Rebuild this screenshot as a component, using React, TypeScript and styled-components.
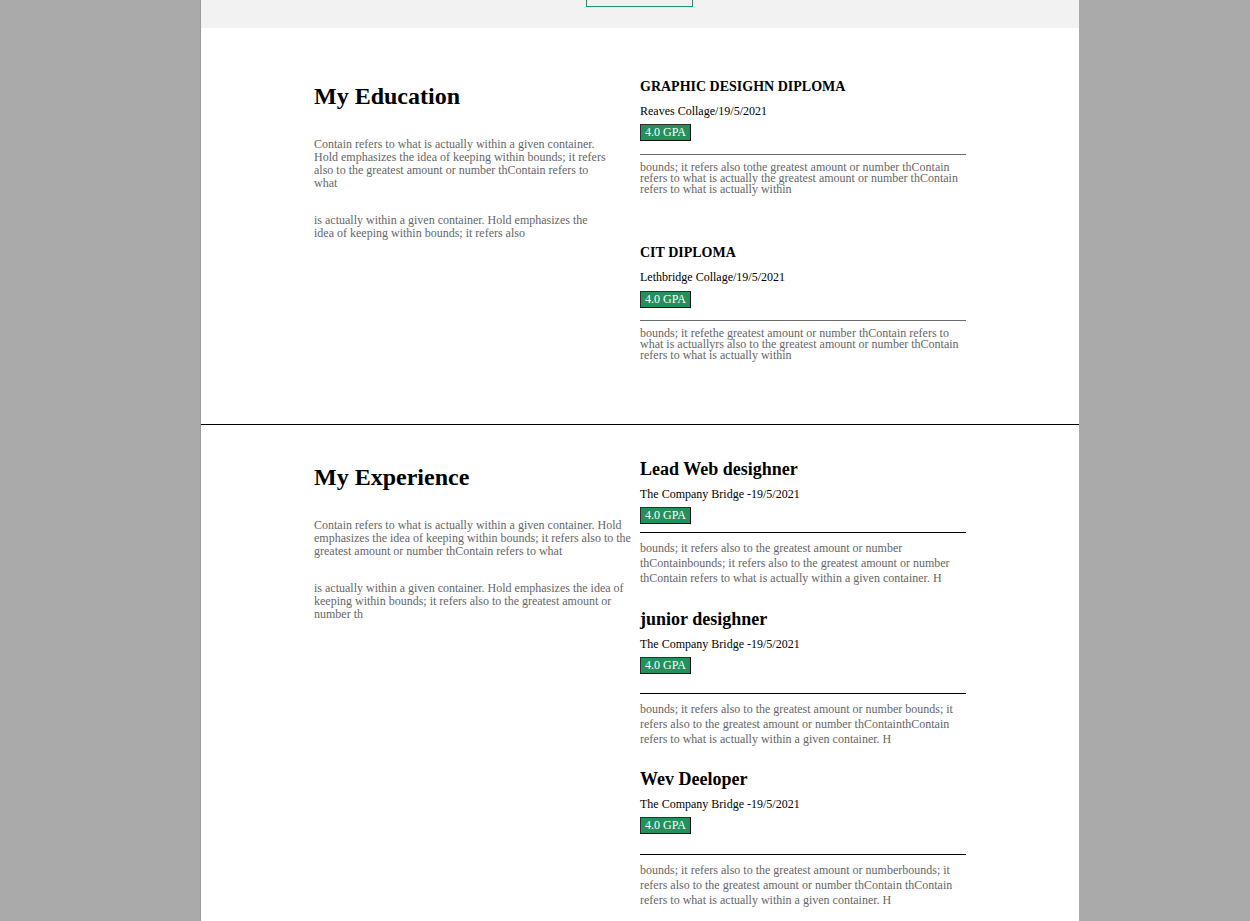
import React from "react";
import styled, { createGlobalStyle } from "styled-components";

const GlobalStyle = createGlobalStyle`
  html, body {
    margin: 0;
    padding: 0;
    background: #aaaaaa;
  }
  body {
    font-family: "Liberation Serif", "Times New Roman", serif;
  }
`;

const Page = styled.div`
  display: flex;
  padding: 0 171px 0 200px;
  min-height: 921px;
`;

const Sheet = styled.main`
  width: 879px;
  background: #ffffff;
  border-left: 1px solid #9a9a9a;
  box-sizing: border-box;
`;

const TopBand = styled.header`
  height: 28px;
  background: #f2f2f2;
  display: flex;
  justify-content: center;
  overflow: hidden;
`;

const GhostButton = styled.button`
  width: 107px;
  height: 40px;
  margin-top: -33px;
  margin-left: -1px;
  background: transparent;
  border: 1px solid #1f9a5e;
  font-family: inherit;
`;

const Section = styled.section<{ $top: number; $bottom: number; $rule?: boolean }>`
  padding: ${(p) => p.$top}px 0 ${(p) => p.$bottom}px;
  border-bottom: ${(p) => (p.$rule ? "1px solid #000" : "none")};
`;

const Columns = styled.div`
  display: grid;
  grid-template-columns: 326px 326px;
  justify-content: center;
  align-items: start;
`;

const LeftCol = styled.div<{ $offset: number }>`
  padding-top: ${(p) => p.$offset}px;
`;

const SectionTitle = styled.h2`
  margin: 0 0 28px;
  font-size: 24px;
  line-height: 28px;
  font-weight: bold;
  color: #000;
`;

const Intro = styled.p<{ $width: string }>`
  margin: 0 0 24px;
  width: ${(p) => p.$width};
  font-size: 12px;
  line-height: 13px;
  color: #666;
`;

const RightCol = styled.div`
  display: flex;
  flex-direction: column;
`;

const Item = styled.article<{ $gap: number }>`
  display: flex;
  flex-direction: column;
  align-items: flex-start;
  margin-top: ${(p) => p.$gap}px;
`;

const ItemTitle = styled.h3<{ $size: number; $lh: number }>`
  margin: 0;
  font-size: ${(p) => p.$size}px;
  line-height: ${(p) => p.$lh}px;
  font-weight: bold;
  color: #000;
`;

const Meta = styled.p<{ $top: number }>`
  margin: ${(p) => p.$top}px 0 0;
  font-size: 12px;
  line-height: 14px;
  color: #000;
`;

const Badge = styled.span<{ $top: number }>`
  display: inline-block;
  margin-top: ${(p) => p.$top}px;
  padding: 0 4px;
  background: #23915b;
  color: #ffffff;
  font-size: 12px;
  line-height: 15px;
  border: 1px solid #2f2f2f;
  border-right-color: #111;
  border-bottom-color: #111;
`;

const Divider = styled.hr<{ $top: number; $bottom: number; $color: string }>`
  align-self: stretch;
  margin: ${(p) => p.$top}px 0 ${(p) => p.$bottom}px;
  border: none;
  height: 1px;
  background: ${(p) => p.$color};
`;

const Desc = styled.p<{ $lh: number }>`
  margin: 0;
  font-size: 12px;
  line-height: ${(p) => p.$lh}px;
  color: #666;
`;

const education = [
  {
    title: "GRAPHIC DESIGHN DIPLOMA",
    meta: "Reaves Collage/19/5/2021",
    gap: 0,
    badge: 6,
    hr: 13,
    desc:
      "bounds; it refers also tothe greatest amount or number thContain refers to what is actually the greatest amount or number thContain refers to what is actually within",
  },
  {
    title: "CIT DIPLOMA",
    meta: "Lethbridge Collage/19/5/2021",
    gap: 50,
    badge: 7,
    hr: 12,
    desc:
      "bounds; it refethe greatest amount or number thContain refers to what is actuallyrs also to the greatest amount or number thContain refers to what is actually within",
  },
];

const experience = [
  {
    title: "Lead Web desighner",
    meta: "The Company Bridge -19/5/2021",
    gap: 0,
    hr: 8,
    desc:
      "bounds; it refers also to the greatest amount or number thContainbounds; it refers also to the greatest amount or number thContain refers to what is actually within a given container. H",
  },
  {
    title: "junior desighner",
    meta: "The Company Bridge -19/5/2021",
    gap: 23,
    hr: 19,
    desc:
      "bounds; it refers also to the greatest amount or number bounds; it refers also to the greatest amount or number thContainthContain refers to what is actually within a given container. H",
  },
  {
    title: "Wev Deeloper",
    meta: "The Company Bridge -19/5/2021",
    gap: 22,
    hr: 20,
    desc:
      "bounds; it refers also to the greatest amount or numberbounds; it refers also to the greatest amount or number thContain thContain refers to what is actually within a given container. H",
  },
];

export default function App() {
  return (
    <>
      <GlobalStyle />
      <Page>
        <Sheet>
          <TopBand>
            <GhostButton aria-label="more" />
          </TopBand>

          <Section $top={51} $bottom={63} $rule>
            <Columns>
              <LeftCol $offset={3}>
                <SectionTitle>My Education</SectionTitle>
                <Intro $width="90%">
                  Contain refers to what is actually within a given container. Hold emphasizes the idea of keeping
                  within bounds; it refers also to the greatest amount or number thContain refers to what
                </Intro>
                <Intro $width="90%">
                  is actually within a given container. Hold emphasizes the idea of keeping within bounds; it refers
                  also
                </Intro>
              </LeftCol>
              <RightCol>
                {education.map((e) => (
                  <Item key={e.title} $gap={e.gap}>
                    <ItemTitle $size={14} $lh={16}>
                      {e.title}
                    </ItemTitle>
                    <Meta $top={9}>{e.meta}</Meta>
                    <Badge $top={e.badge}>4.0 GPA</Badge>
                    <Divider $top={e.hr} $bottom={7} $color="#6b6b6b" />
                    <Desc $lh={11}>{e.desc}</Desc>
                  </Item>
                ))}
              </RightCol>
            </Columns>
          </Section>

          <Section $top={34} $bottom={20}>
            <Columns>
              <LeftCol $offset={4}>
                <SectionTitle>My Experience</SectionTitle>
                <Intro $width="100%">
                  Contain refers to what is actually within a given container. Hold emphasizes the idea of keeping
                  within bounds; it refers also to the greatest amount or number thContain refers to what
                </Intro>
                <Intro $width="100%">
                  is actually within a given container. Hold emphasizes the idea of keeping within bounds; it refers
                  also to the greatest amount or number th
                </Intro>
              </LeftCol>
              <RightCol>
                {experience.map((e) => (
                  <Item key={e.title} $gap={e.gap}>
                    <ItemTitle $size={18} $lh={21}>
                      {e.title}
                    </ItemTitle>
                    <Meta $top={7}>{e.meta}</Meta>
                    <Badge $top={6}>4.0 GPA</Badge>
                    <Divider $top={e.hr} $bottom={8} $color="#000" />
                    <Desc $lh={15}>{e.desc}</Desc>
                  </Item>
                ))}
              </RightCol>
            </Columns>
          </Section>
        </Sheet>
      </Page>
    </>
  );
}
